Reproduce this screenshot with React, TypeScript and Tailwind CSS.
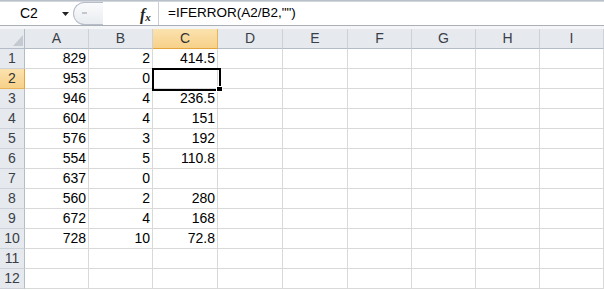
import React from 'react';

const cols = ['A', 'B', 'C', 'D', 'E', 'F', 'G', 'H', 'I'];

// [A, B, C] values per row, rest empty
const rows: string[][] = [
  ['829', '2', '414.5'],
  ['953', '0', ''],
  ['946', '4', '236.5'],
  ['604', '4', '151'],
  ['576', '3', '192'],
  ['554', '5', '110.8'],
  ['637', '0', ''],
  ['560', '2', '280'],
  ['672', '4', '168'],
  ['728', '10', '72.8'],
  ['', '', ''],
  ['', '', ''],
];

const FormulaBar: React.FC = () => (
  <div className="h-[29px] flex flex-col">
    <div className="h-[2px] bg-gradient-to-b from-[#aeb5bf] to-[#dde1e6]" />
    <div className="h-[23px] flex bg-white">
      <div className="w-[73px] flex items-center relative">
        <span className="pl-[20px] text-[14px] text-black">C2</span>
        <svg className="absolute left-[62px] top-[10px]" width="7" height="5" viewBox="0 0 7 5">
          <path d="M0 0 H7 L3.5 4 Z" fill="#222" />
        </svg>
      </div>
      <div className="w-[85px] relative flex items-center">
        <div className="absolute left-0 top-[0px] h-[23px] w-[30px] rounded-l-full border border-r-0 border-[#b7bec8] bg-gradient-to-b from-[#fafbfc] to-[#e9ecf0]" />
        <div className="absolute left-[9px] top-[10px] w-[5px] h-[2px] bg-[#c2c8d0]" />
        <span
          className="absolute left-[67px] top-[1px] text-[16px] italic font-bold text-[#222]"
          style={{ fontFamily: '"Liberation Serif", serif' }}
        >
          f<span className="text-[11px] relative top-[1px]">x</span>
        </span>
      </div>
      <div className="flex-1 flex items-center border-l border-[#c9ced6] pl-[9px] text-[13.5px] text-black">
        =IFERROR(A2/B2,"")
      </div>
    </div>
    <div className="h-[1px] bg-[#a9b0ba]" />
    <div className="h-[3px] bg-[#f4f5f7]" />
  </div>
);

export default function App() {
  return (
    <div
      className="w-[604px] h-[290px] overflow-hidden bg-white relative"
      style={{ fontFamily: '"Liberation Sans", Arial, sans-serif' }}
    >
      <FormulaBar />
      <div className="grid grid-cols-[25px_64px_64px_65px_65px_65px_64px_64px_64px_64px]">
        {/* header row */}
        <div className="h-[20px] border-r border-b border-[#b4bcc7] bg-[#e6e9ee] relative">
          <svg className="absolute left-[13px] top-[6px]" width="10" height="11" viewBox="0 0 10 11">
            <path d="M10 0 V11 H0 Z" fill="#c5cad2" />
          </svg>
        </div>
        {cols.map((c) => (
          <div
            key={c}
            className={`h-[20px] flex items-center justify-center text-[14px] border-r border-b ${
              c === 'C'
                ? 'bg-gradient-to-b from-[#fbe2ae] to-[#f7d189] border-r-[#e9b35a] border-b-[#e3a43d] text-[#333]'
                : 'bg-[#e6e9ee] border-r-[#cdd2da] border-b-[#b4bcc7] text-[#3a3f47]'
            }`}
          >
            {c}
          </div>
        ))}

        {rows.map((r, i) => (
          <React.Fragment key={i}>
            <div
              className={`h-[20px] flex items-center justify-center text-[14px] border-r border-b ${
                i === 1
                  ? 'bg-gradient-to-b from-[#fbe2ae] to-[#f7d189] border-r-[#e3a43d] border-b-[#e9b35a] text-[#333]'
                  : 'bg-[#e6e9ee] border-r-[#b4bcc7] border-b-[#cdd2da] text-[#3a3f47]'
              }`}
            >
              {i + 1}
            </div>
            {cols.map((c, j) => (
              <div
                key={c}
                className="h-[20px] flex items-center justify-end pr-[2px] text-[14px] text-black border-r border-b border-[#d9d9d9]"
              >
                {j < 3 ? r[j] : ''}
              </div>
            ))}
          </React.Fragment>
        ))}
      </div>

      {/* active cell C2 */}
      <div className="absolute left-[152px] top-[68px] w-[69px] h-[23px] border-2 border-black" />
      <div className="absolute left-[216px] top-[86px] w-[7px] h-[6px] bg-black border border-white" />
    </div>
  );
}
